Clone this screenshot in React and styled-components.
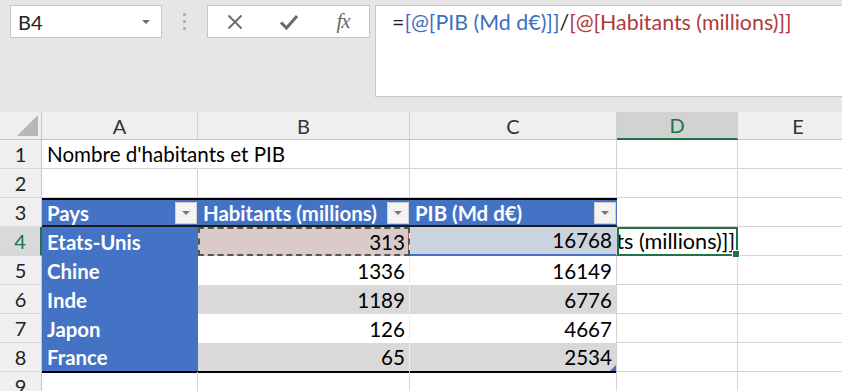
import React from "react";
import styled, { createGlobalStyle } from "styled-components";

const GRID = "#d4d4d4";
const GREEN = "#217346";
const BLUE = "#4472c4";

const Global = createGlobalStyle`
  html, body { margin: 0; padding: 0; background: #fff; overflow: hidden; }
  body { font-family: Lato, "Open Sans", sans-serif; }
`;

const Page = styled.div`
  width: 842px;
  height: 391px;
  overflow: hidden;
`;

const Bar = styled.div`
  height: 112px;
  box-sizing: border-box;
  background: #e6e6e6;
  display: flex;
  align-items: flex-start;
  padding: 5px 0 0 10px;
`;

const NameBox = styled.div`
  width: 152px;
  height: 33px;
  box-sizing: border-box;
  background: #fff;
  border: 1px solid #c6c6c6;
  display: flex;
  align-items: center;
  justify-content: space-between;
  padding: 0 11px 0 7px;
  font-size: 20px;
  color: #222;
`;

const Caret = styled.span`
  width: 0;
  height: 0;
  border-left: 4px solid transparent;
  border-right: 4px solid transparent;
  border-top: 4px solid ${(p) => p.$color || "#6a6a6a"};
`;

const Grip = styled.div`
  width: 45px;
  height: 33px;
  display: flex;
  flex-direction: column;
  align-items: center;
  justify-content: center;
  gap: 4px;
`;

const GripDot = styled.span`
  width: 3px;
  height: 3px;
  border-radius: 50%;
  background: #a8a8a8;
`;

const FxButtons = styled.div`
  width: 163px;
  height: 33px;
  box-sizing: border-box;
  background: #fff;
  border: 1px solid #c6c6c6;
  display: grid;
  grid-template-columns: repeat(3, 54px);
  align-items: center;
  justify-items: center;
`;

const FxLabel = styled.span`
  font-family: "Liberation Serif", "DejaVu Serif", serif;
  font-style: italic;
  font-size: 21px;
  color: #6a6a6a;
  letter-spacing: -1px;
`;

const FormulaBox = styled.div`
  margin-left: 5px;
  flex: 1;
  height: 92px;
  box-sizing: border-box;
  background: #fff;
  border: 1px solid #c6c6c6;
  border-right: none;
  padding: 2px 0 0 16px;
  font-size: 21.4px;
  line-height: 28px;
  color: #222;
  white-space: nowrap;
`;

const Tok = styled.span`
  color: ${(p) => p.$c};
`;

const Sheet = styled.div`
  display: grid;
  grid-template-columns: 42px 156px 212px 207px 121px 121px;
  grid-template-rows: 28px repeat(9, 29px);
`;

const Corner = styled.div`
  box-sizing: border-box;
  background: #efefef;
  border-right: 1px solid #c6c6c6;
  border-bottom: 1px solid #c6c6c6;
  display: flex;
  align-items: flex-end;
  justify-content: flex-end;
  padding: 0 3px 3px 0;
`;

const CornerTri = styled.span`
  width: 0;
  height: 0;
  border-left: 21px solid transparent;
  border-bottom: 21px solid #b7b7b7;
`;

const ColHead = styled.div`
  box-sizing: border-box;
  display: flex;
  align-items: center;
  justify-content: center;
  font-size: 20px;
  color: ${(p) => (p.$active ? GREEN : "#333")};
  background: ${(p) => (p.$active ? "#d2d2d2" : "#efefef")};
  border-right: 1px solid #d0d0d0;
  border-bottom: ${(p) => (p.$active ? `2px solid ${GREEN}` : "1px solid #c6c6c6")};
`;

const RowHead = styled.div`
  box-sizing: border-box;
  display: flex;
  align-items: flex-end;
  justify-content: center;
  padding-bottom: 2px;
  font-size: 20px;
  line-height: 24px;
  color: ${(p) => (p.$active ? GREEN : "#222")};
  background: ${(p) => (p.$active ? "#d9d9d9" : "#efefef")};
  border-right: ${(p) => (p.$active ? `2px solid ${GREEN}` : "1px solid #c6c6c6")};
  border-bottom: 1px solid #d6d6d6;
`;

const Cell = styled.div`
  box-sizing: border-box;
  position: relative;
  display: flex;
  align-items: flex-end;
  padding: 0 4px 2px 5px;
  font-size: 20.6px;
  line-height: 24px;
  white-space: nowrap;
  color: #000;
  border-right: 1px solid ${(p) => (p.$noRight ? "transparent" : GRID)};
  border-bottom: 1px solid ${GRID};
`;

const TableHead = styled.div`
  box-sizing: border-box;
  position: relative;
  display: flex;
  align-items: center;
  padding: 0 26px 0 5px;
  font-size: 20.4px;
  font-weight: 700;
  white-space: nowrap;
  color: #fff;
  background: ${BLUE};
  border-top: 2px solid #000;
  border-bottom: 2px solid #1a1a1a;
`;

const FilterBtn = styled.span`
  position: absolute;
  right: 1px;
  top: 2px;
  width: 22px;
  height: 22px;
  box-sizing: border-box;
  background: #f3f3f3;
  border: 1px solid #cfcfcf;
  display: flex;
  align-items: center;
  justify-content: center;
`;

const FirstCol = styled.div`
  box-sizing: border-box;
  display: flex;
  align-items: flex-end;
  padding: 0 4px 2px 5px;
  font-size: 20.4px;
  line-height: 24px;
  font-weight: 700;
  color: #fff;
  background: ${BLUE};
  border-bottom: ${(p) => (p.$last ? "2px solid #000" : "none")};
  margin-bottom: ${(p) => (p.$last ? "-1px" : "0")};
`;

const markFill = { copy: "#dacaca", ref: "#cbd3de" };

const NumCell = styled.div`
  box-sizing: border-box;
  position: relative;
  display: flex;
  align-items: flex-end;
  justify-content: flex-end;
  padding: 0 4px 2px 4px;
  font-size: 20.6px;
  line-height: 24px;
  color: #000;
  background: ${(p) => markFill[p.$mark] || (p.$band ? "#d9d9d9" : "#fff")};
  border-right: 1px solid ${(p) => (p.$edge ? GRID : "#ececec")};
  border-bottom: ${(p) =>
    p.$last ? "2px solid #000" : p.$mark === "ref" ? "2px solid #4a72c2" : "none"};
  margin-bottom: ${(p) => (p.$last ? "-1px" : "0")};
  outline: ${(p) => (p.$mark === "copy" ? "2px dashed #4d5b4e" : "none")};
  outline-offset: -2px;
  box-shadow: ${(p) => (p.$mark === "copy" ? "inset -1px 0 0 #c0504d" : "none")};
`;

const ResizeTri = styled.span`
  position: absolute;
  right: 0;
  bottom: 0;
  width: 0;
  height: 0;
  border-left: 6px solid transparent;
  border-bottom: 6px solid #4e68c6;
`;

const ActiveCell = styled.div`
  box-sizing: border-box;
  position: relative;
  display: flex;
  align-items: flex-end;
  justify-content: flex-end;
  padding: 0 0 1px 0;
  font-size: 21.6px;
  line-height: 24px;
  white-space: nowrap;
  color: #000;
  border: 2px solid ${GREEN};
`;

const EditClip = styled.div`
  overflow: hidden;
  display: flex;
  justify-content: flex-end;
  width: 100%;
  padding-right: 1px;
`;

const FillHandle = styled.span`
  position: absolute;
  right: -4px;
  bottom: -4px;
  width: 6px;
  height: 6px;
  background: ${GREEN};
  border: 1px solid #fff;
  z-index: 2;
`;

const CloseIcon = () => (
  <svg width="18" height="18" viewBox="0 0 18 18">
    <path d="M2.5 2.5 L15.5 15.5 M15.5 2.5 L2.5 15.5" stroke="#6a6a6a" strokeWidth="1.8" fill="none" />
  </svg>
);

const CheckIcon = () => (
  <svg width="20" height="18" viewBox="0 0 20 18">
    <path d="M2 9.5 L7.5 15 L18 3" stroke="#6a6a6a" strokeWidth="3" fill="none" strokeLinejoin="miter" />
  </svg>
);

const rows = [
  { n: 4, pays: "Etats-Unis", hab: 313, pib: 16768 },
  { n: 5, pays: "Chine", hab: 1336, pib: 16149 },
  { n: 6, pays: "Inde", hab: 1189, pib: 6776 },
  { n: 7, pays: "Japon", hab: 126, pib: 4667 },
  { n: 8, pays: "France", hab: 65, pib: 2534 },
];

const formula = "=[@[PIB (Md d€)]]/[@[Habitants (millions)]]";

const Filter = () => (
  <FilterBtn>
    <Caret $color="#777" />
  </FilterBtn>
);

export default function App() {
  return (
    <Page>
      <Global />
      <Bar>
        <NameBox>
          <span>B4</span>
          <Caret />
        </NameBox>
        <Grip>
          <GripDot />
          <GripDot />
          <GripDot />
        </Grip>
        <FxButtons>
          <CloseIcon />
          <CheckIcon />
          <FxLabel>fx</FxLabel>
        </FxButtons>
        <FormulaBox>
          <Tok $c="#222">=</Tok>
          <Tok $c="#3f6fc0">[@[PIB (Md d€)]]</Tok>
          <Tok $c="#222">/</Tok>
          <Tok $c="#b13a3a">[@[Habitants (millions)]]</Tok>
        </FormulaBox>
      </Bar>
      <Sheet>
        <Corner>
          <CornerTri />
        </Corner>
        <ColHead>A</ColHead>
        <ColHead>B</ColHead>
        <ColHead>C</ColHead>
        <ColHead $active>D</ColHead>
        <ColHead>E</ColHead>

        <RowHead>1</RowHead>
        <Cell $noRight>Nombre d'habitants et PIB</Cell>
        <Cell />
        <Cell />
        <Cell />
        <Cell />

        <RowHead>2</RowHead>
        <Cell />
        <Cell />
        <Cell />
        <Cell />
        <Cell />

        <RowHead>3</RowHead>
        <TableHead>
          Pays
          <Filter />
        </TableHead>
        <TableHead>
          Habitants (millions)
          <Filter />
        </TableHead>
        <TableHead>
          PIB (Md d€)
          <Filter />
        </TableHead>
        <Cell />
        <Cell />

        {rows.map((r, i) => {
          const band = i % 2 === 0;
          const last = i === rows.length - 1;
          const first = i === 0;
          return (
            <React.Fragment key={r.n}>
              <RowHead $active={first}>{r.n}</RowHead>
              <FirstCol $last={last}>{r.pays}</FirstCol>
              <NumCell $band={band} $last={last} $mark={first ? "copy" : undefined}>
                {r.hab}
              </NumCell>
              <NumCell $band={band} $last={last} $edge $mark={first ? "ref" : undefined}>
                {r.pib}
                {last && <ResizeTri />}
              </NumCell>
              {first ? (
                <ActiveCell>
                  <EditClip>
                    <span>{formula}</span>
                  </EditClip>
                  <FillHandle />
                </ActiveCell>
              ) : (
                <Cell />
              )}
              <Cell />
            </React.Fragment>
          );
        })}

        <RowHead>9</RowHead>
        <Cell />
        <Cell />
        <Cell />
        <Cell />
        <Cell />
      </Sheet>
    </Page>
  );
}
